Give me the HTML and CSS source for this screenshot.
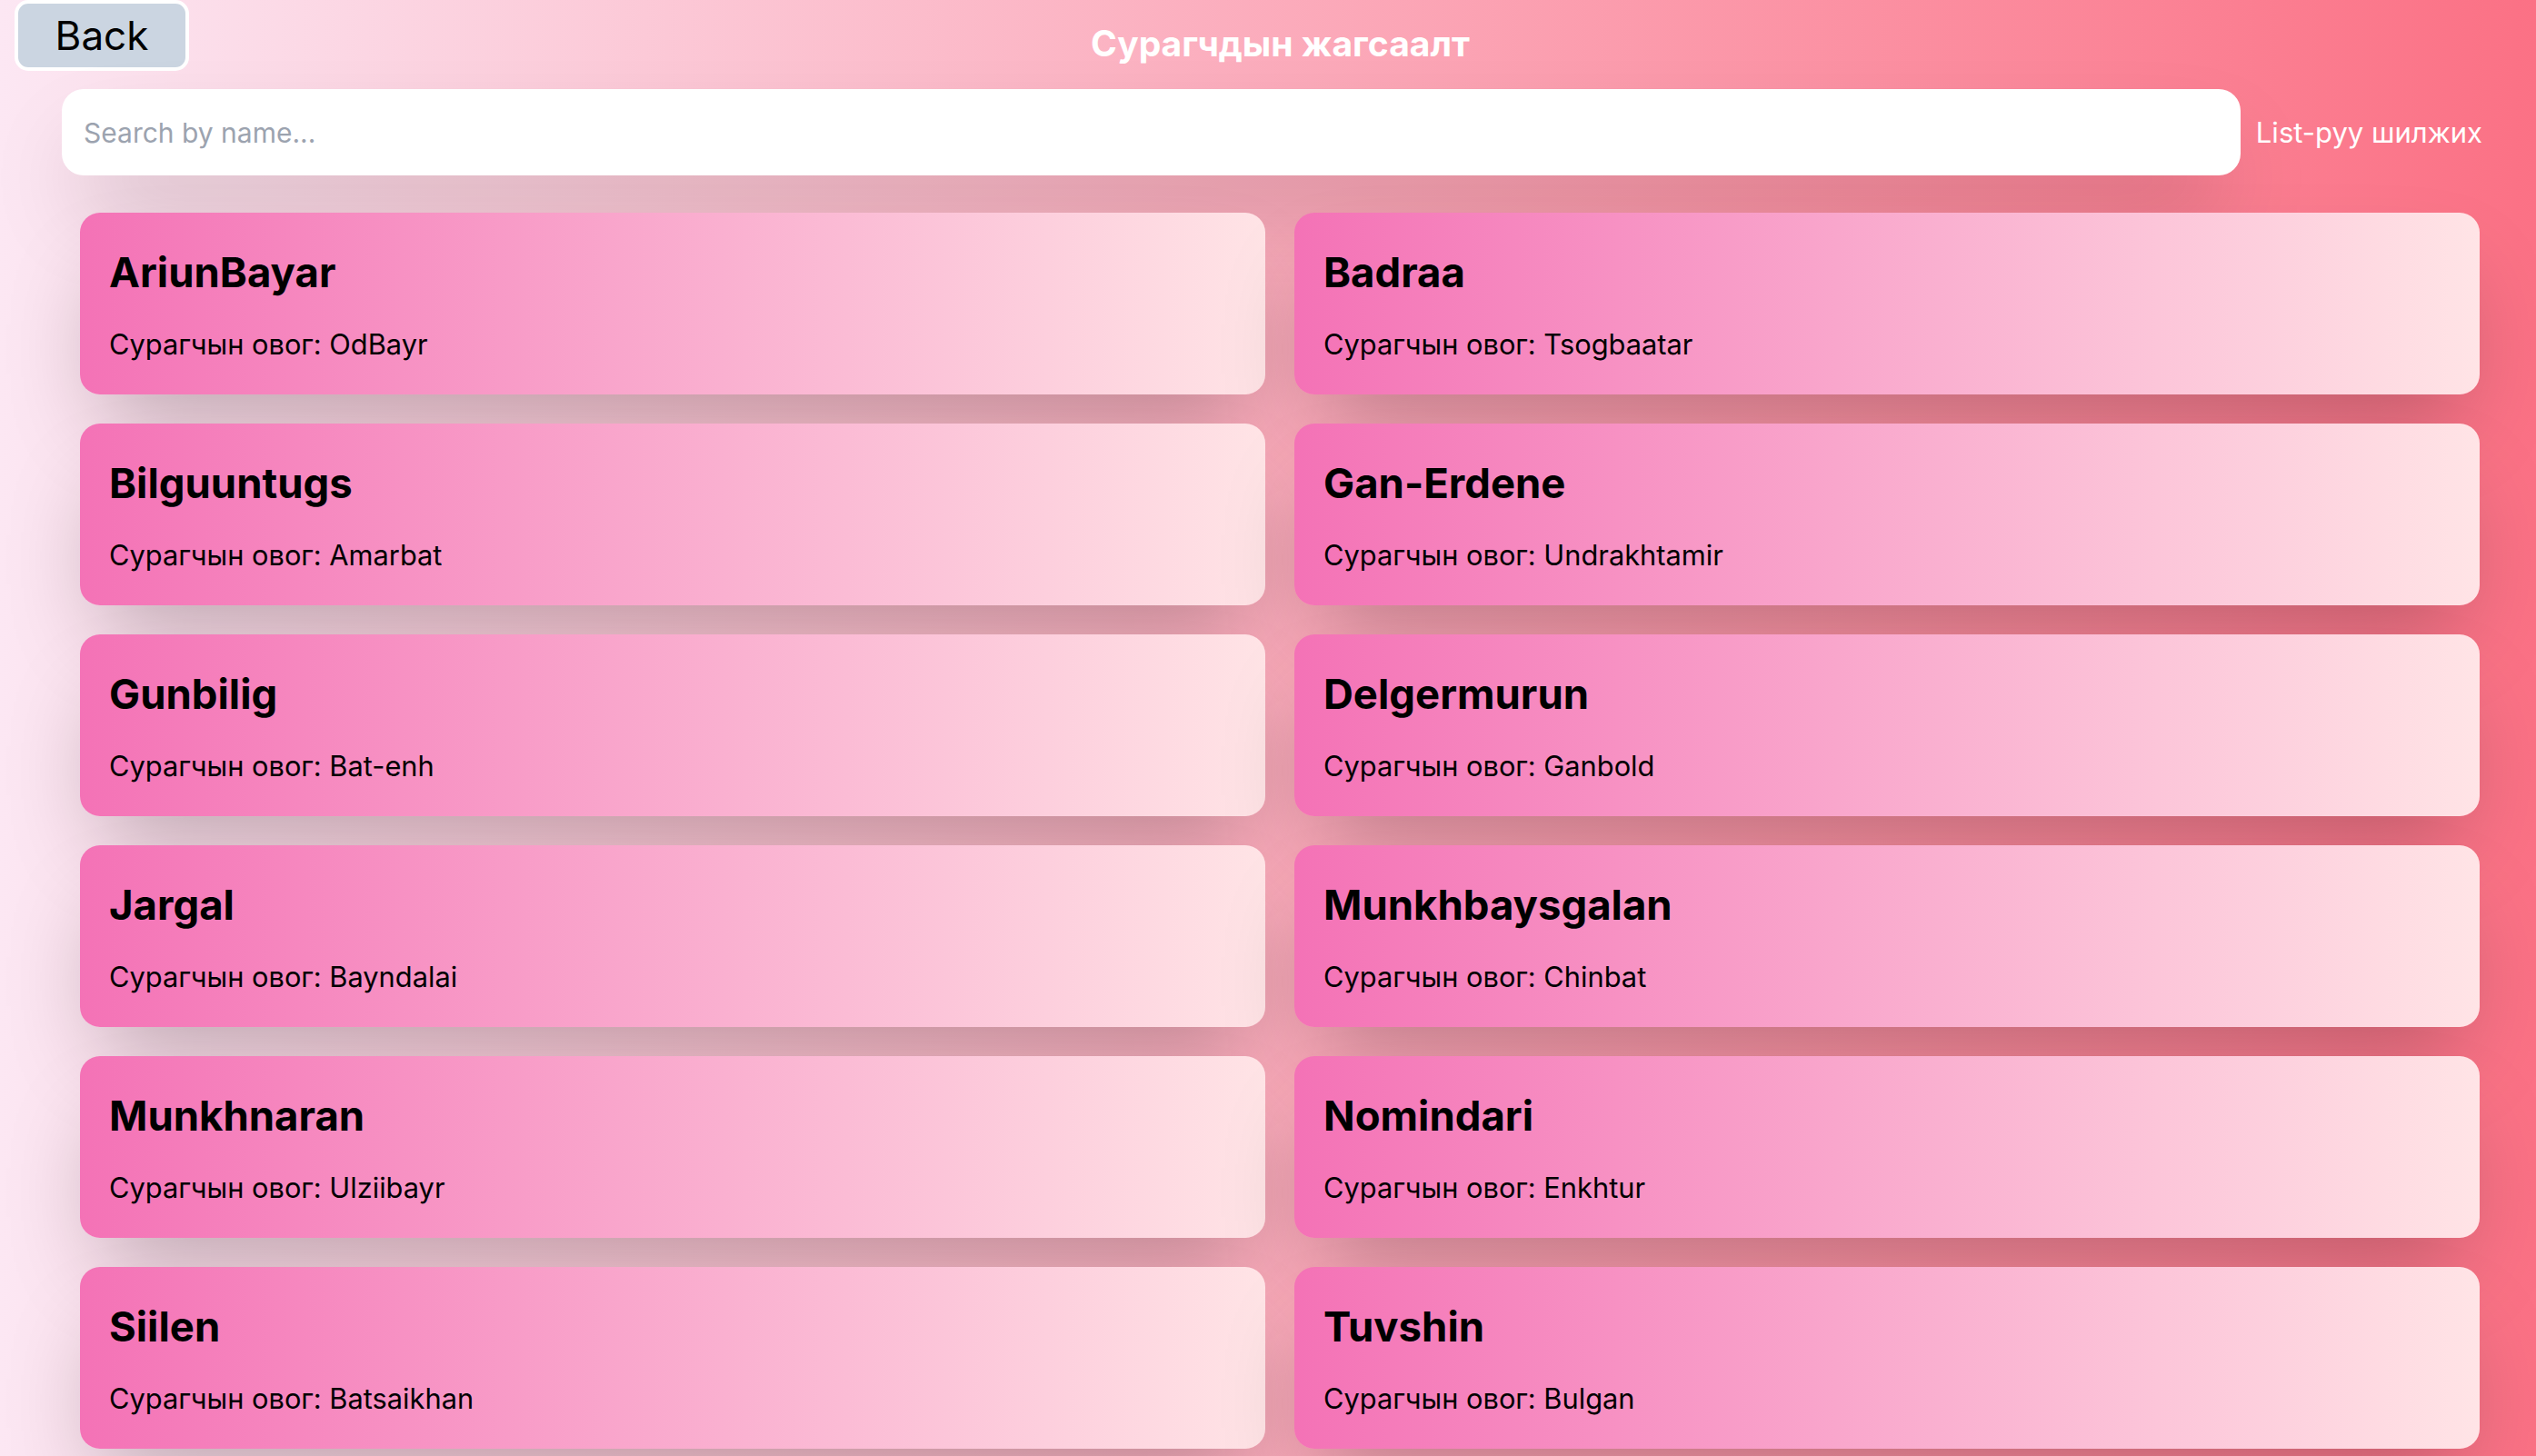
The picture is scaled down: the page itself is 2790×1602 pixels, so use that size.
FILE: index.html
```html
<!DOCTYPE html>
<html lang="mn">
<head>
<meta charset="utf-8">
<title>Сурагчдын жагсаалт</title>
<link rel="stylesheet" href="styles.css">
</head>
<body>
<div class="page">
  <header class="header">
    <button class="back-btn" type="button">Back</button>
    <h1 class="title">Сурагчдын жагсаалт</h1>
    <div class="header-spacer"></div>
  </header>
  <div class="search-row">
    <input class="search" type="text" placeholder="Search by name...">
    <button class="list-link" type="button">List-руу шилжих</button>
  </div>
  <main class="grid">
    <div class="card"><h2 class="name">AriunBayar</h2><p class="sub">Сурагчын овог: OdBayr</p></div>
    <div class="card"><h2 class="name">Badraa</h2><p class="sub">Сурагчын овог: Tsogbaatar</p></div>
    <div class="card"><h2 class="name">Bilguuntugs</h2><p class="sub">Сурагчын овог: Amarbat</p></div>
    <div class="card"><h2 class="name">Gan-Erdene</h2><p class="sub">Сурагчын овог: Undrakhtamir</p></div>
    <div class="card"><h2 class="name">Gunbilig</h2><p class="sub">Сурагчын овог: Bat-enh</p></div>
    <div class="card"><h2 class="name">Delgermurun</h2><p class="sub">Сурагчын овог: Ganbold</p></div>
    <div class="card"><h2 class="name">Jargal</h2><p class="sub">Сурагчын овог: Bayndalai</p></div>
    <div class="card"><h2 class="name">Munkhbaysgalan</h2><p class="sub">Сурагчын овог: Chinbat</p></div>
    <div class="card"><h2 class="name">Munkhnaran</h2><p class="sub">Сурагчын овог: Ulziibayr</p></div>
    <div class="card"><h2 class="name">Nomindari</h2><p class="sub">Сурагчын овог: Enkhtur</p></div>
    <div class="card"><h2 class="name">Siilen</h2><p class="sub">Сурагчын овог: Batsaikhan</p></div>
    <div class="card"><h2 class="name">Tuvshin</h2><p class="sub">Сурагчын овог: Bulgan</p></div>
  </main>
</div>
</body>
</html>
```
FILE: styles.css
```css
* { box-sizing: border-box; }

html, body {
  margin: 0;
  padding: 0;
}

body {
  font-family: Inter, "Noto Sans", "DejaVu Sans", sans-serif;
  background: linear-gradient(to right, #fce7f3, #fb7185);
  min-height: 100vh;
  color: #000;
}

.page {
  padding: 0 59px 60px 68px;
}

.header {
  display: grid;
  grid-template-columns: 1fr auto 1fr;
  align-items: start;
  height: 78px;
  margin-left: -52px;
}

.back-btn {
  justify-self: start;
  width: 192px;
  height: 78px;
  background: #cbd5e1;
  border: 4px solid #ffffff;
  border-radius: 15px;
  font-family: Inter, "Noto Sans", sans-serif;
  font-size: 44px;
  color: #000;
  padding: 0;
  line-height: 1;
  cursor: pointer;
}

.title {
  margin: 19px 0 0 0;
  font-size: 39px;
  line-height: 57px;
  font-weight: 700;
  color: #ffffff;
  white-space: nowrap;
  position: relative;
  left: 35px;
}

.search-row {
  display: flex;
  align-items: center;
  gap: 17px;
  margin-top: 20px;
}

.search {
  flex: 1;
  height: 95px;
  border: none;
  outline: none;
  border-radius: 24px;
  background: #ffffff;
  padding: 0 24px;
  font-family: Inter, "Noto Sans", sans-serif;
  font-size: 30px;
  color: #111;
  box-shadow: 0 50px 100px -24px rgba(0, 0, 0, 0.25);
}

.search::placeholder {
  color: #9ca3af;
}

.list-link {
  background: none;
  border: none;
  padding: 0;
  font-family: Inter, "Noto Sans", sans-serif;
  font-size: 31px;
  color: #ffffff;
  white-space: nowrap;
  cursor: pointer;
}

.grid {
  display: grid;
  grid-template-columns: 1fr 1fr;
  gap: 32px;
  margin: 41px 3px 0 20px;
}

.card {
  background: linear-gradient(to right, #f472b6, #ffe4e6);
  border-radius: 22px;
  padding: 32px 32px 33px 32px;
  box-shadow: 0 50px 100px -24px rgba(0, 0, 0, 0.25);
  height: 200px;
}

.name {
  margin: 0;
  font-size: 45.5px;
  line-height: 68px;
  font-weight: 700;
}

.sub {
  margin: 22px 0 0 0;
  font-size: 30.8px;
  line-height: 45px;
  font-weight: 400;
}
```
